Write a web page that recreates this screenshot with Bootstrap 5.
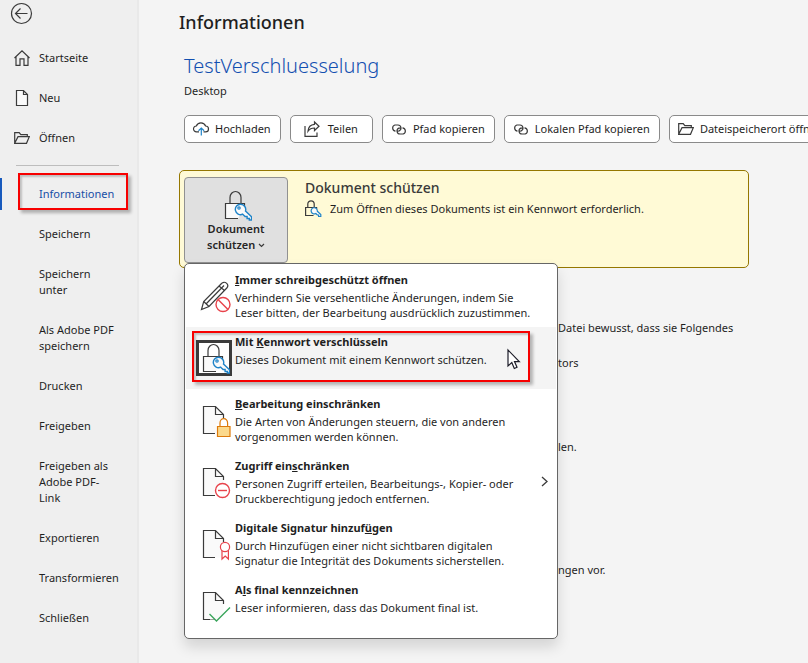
<!DOCTYPE html>
<html lang="de">
<head>
<meta charset="utf-8">
<meta name="viewport" content="width=device-width, initial-scale=1">
<title>Informationen</title>
<link href="https://cdn.jsdelivr.net/npm/bootstrap@5.3.0/dist/css/bootstrap.min.css" rel="stylesheet">
<style>
  body { font-family: "Noto Sans", "Open Sans", sans-serif; font-size: 11px; line-height: 16px; color: #1f1f1f; background: #f4f4f4; }
  svg { flex: none; fill: none; stroke: #3b3b3b; stroke-width: 1.2; overflow: visible; }
  .side { width: 139px; flex: none; background: #efefef; border-right: 2px solid #e9e9e9; }
  .back { margin: 2px 0 0 10px; width: 23px; height: 23px; }
  .side .nav { margin-top: 13px; }
  .side .nav-link { padding: 12px 8px 12px 39px; color: #1f1f1f; }
  .side .nav-link.with-icon { padding-left: 14px; gap: 9px; }
  .side hr { margin: 7px 18px 8px 16px; border-color: #bdbdbd; opacity: 1; }
  .side .nav-link.active { color: #174ea6; }
  .side .nav-link.active::before { content: ""; position: absolute; left: 0; top: 4px; bottom: 4px; width: 2px; background: #185abd; }
  .marker { position: absolute; border: 2px solid #f70000; box-shadow: 3px 3px 3px #0004, inset 2px 2px 2px #0003; pointer-events: none; }
  .marker-nav { inset: -1px 9px 4px 18px; }
  .marker-item { inset: 4px 26px 7px 6px; }
  main { padding: 8px 0 0 40px; min-width: 0; }
  h1 { font-size: 18px; line-height: 28px; font-weight: 500; margin: 0; }
  h2 { font-size: 20px; line-height: 28px; color: #124fb0; margin: 16px 0 0 5px; font-weight: 300; }
  .place { margin: 3px 0 16px 5px; }
  .tools { gap: 9px; margin-left: 5px; }
  .tools .btn { flex: none; gap: 6px; height: 28px; padding: 0 9px 0 8px; font-size: 11px; line-height: 16px; color: #1f1f1f; background: #fff; border-color: #8a8a8a; border-radius: 5px; }
  .tools .btn-share { padding: 0 14px 0 13px; gap: 8px; }
  .panel { margin-top: 27px; width: calc(100% - 59px); min-height: 98px; background: #fffad6; border: 1px solid #957700; border-radius: 5px; padding: 6px 4px 4px; gap: 17px; }
  .protect { width: 104px; height: 86px; padding: 12px 0 0; color: #262626; background: #e0e0e0; border: 1px solid #919191; border-radius: 4px; font-size: 11px; line-height: 16px; font-weight: 600; }
  .protect:hover { background: #e0e0e0; color: #262626; }
  .panel h3 { font-size: 14px; line-height: 20px; font-weight: 500; color: #3a3a3a; margin: 1px 0 2px; }
  .protect-menu { position: absolute; z-index: 5; top: 86px; left: 0; width: 374px; padding: 1px; background: #fff; border: 1px solid #666; border-radius: 5px; box-shadow: 0 8px 14px #0002; }
  .entry { height: 62px; padding: 7px 8px 0 49px; border: 0; background: transparent; color: #1f1f1f; line-height: 15px; }
  .entry strong { line-height: 16px; margin-bottom: 2px; }
  .entry.hot { background: #f4f4f4; }
  .entry-icon { position: absolute; left: 10px; top: 13px; width: 36px; height: 36px; }
  .hot .entry-icon { border: 3px solid #3b3b3b; background: #fff; }
  .chev { position: absolute; right: 8px; top: 25px; stroke-width: 1.3; }
  .pointer { position: absolute; right: 36px; top: 22px; }
  .behind { margin-left: 379px; }
  .behind p { margin: 0 0 19px; }
  .behind .after-list { margin-bottom: 68px; }
  .behind .after-section { margin-bottom: 107px; }
</style>
<script src="https://cdn.jsdelivr.net/npm/bootstrap@5.3.0/dist/js/bootstrap.bundle.min.js"></script>
</head>
<body>
<svg class="d-none">
  <symbol id="key-lock" viewBox="0 0 28 31">
    <path d="M6 13V7.500a5.500 6 0 0 1 11 0V13" fill="none"/>
    <path d="M14 28.500H1.500V13.500h19v3" fill="#fafafa"/>
    <path d="M18.700 24.200l2.400 2.300h2v2h2.200v1.500h2.200v-3.200l-6-5.800a5.200 5.200 0 1 0-2.800 3.200z" fill="#fafafa" stroke="#1e83c8" stroke-width="1.400"/>
    <circle cx="15" cy="18" r="1.200" fill="none" stroke="#1e83c8"/>
  </symbol>
  <symbol id="folder" viewBox="0 0 16 16">
    <path d="M.7 13V2.700h4.500l1.600 2h6.500v2M.7 13.300L4 6.700h11.300l-2.800 6.600z" fill="none"/>
  </symbol>
  <symbol id="chain" viewBox="0 0 16 11">
    <path d="M4.500 7.200A3.200 3.200 0 0 1 3.800 1H7a3.100 3.100 0 0 1 1.200 5.900L6.500 7.200M11.500 3.800A3.200 3.200 0 0 1 12.200 10H9a3.100 3.100 0 0 1-1.200-5.900L9.500 3.800" fill="none"/>
  </symbol>
  <symbol id="sheet" viewBox="0 0 36 36">
    <path d="M7.500 4.500h12l8 8v19h-20z" fill="#fafafa" stroke="none"/>
    <path d="M19 31.500H7.500v-27h12l8 8V16M19.500 4.500v8h8" fill="none"/>
  </symbol>
</svg>
<div class="d-flex min-vh-100 overflow-hidden">
  <aside class="side">
    <button type="button" class="back btn p-0 border-0 d-flex" aria-label="Zurück">
      <svg width="23" height="23" viewBox="0 0 23 23"><circle cx="11.500" cy="11.500" r="10"/><path d="M17.500 11.500h-12M10.500 6.500l-5 5 5 5"/></svg>
    </button>
    <nav class="nav flex-column flex-nowrap">
      <a class="nav-link with-icon d-flex" href="#"><svg width="16" height="16" viewBox="0 0 16 16"><path d="M.5 8L8 .8 15.500 8M2 6.800V15.300h4V8.800h4v6.500h4V6.800"/></svg>Startseite</a>
      <a class="nav-link with-icon d-flex" href="#"><svg width="16" height="16" viewBox="0 0 16 16"><path d="M2.500.5h7l4 4v11h-11zM9.500.5v4h4" fill="#fafafa"/></svg>Neu</a>
      <a class="nav-link with-icon d-flex" href="#"><svg width="16" height="16"><use href="#folder"/></svg>Öffnen</a>
      <hr>
      <a class="nav-link active position-relative" href="#">Informationen<span class="marker marker-nav"></span></a>
      <a class="nav-link" href="#">Speichern</a>
      <a class="nav-link" href="#">Speichern<br>unter</a>
      <a class="nav-link" href="#">Als Adobe PDF<br>speichern</a>
      <a class="nav-link" href="#">Drucken</a>
      <a class="nav-link" href="#">Freigeben</a>
      <a class="nav-link" href="#">Freigeben als<br>Adobe PDF-<br>Link</a>
      <a class="nav-link" href="#">Exportieren</a>
      <a class="nav-link" href="#">Transformieren</a>
      <a class="nav-link" href="#">Schließen</a>
    </nav>
  </aside>
  <main class="flex-grow-1">
    <h1>Informationen</h1>
    <h2>TestVerschluesselung</h2>
    <p class="place">Desktop</p>
    <div class="tools d-flex">
      <button type="button" class="btn d-flex align-items-center"><svg width="16" height="14" viewBox="0 0 16 14"><path d="M6 9.800H3.500a2.900 2.900 0 0 1-.2-5.800 5 5 0 0 1 9.300 0 2.900 2.900 0 0 1 0 5.800H10.500"/><path d="M8.300 13.500V6M5.500 8.700L8.300 6l2.800 2.700" stroke="#1e83c8"/></svg>Hochladen</button>
      <button type="button" class="btn btn-share d-flex align-items-center"><svg width="16" height="16" viewBox="0 0 16 16"><path d="M1 5v10.300h12V11.500M10.500 1L15 5.200 10.500 9.500V7C7 7 5.500 8 4 10.200 4.300 6 6.500 3.600 10.500 3.300z"/></svg>Teilen</button>
      <button type="button" class="btn d-flex align-items-center"><svg width="16" height="11"><use href="#chain"/></svg>Pfad kopieren</button>
      <button type="button" class="btn d-flex align-items-center"><svg width="16" height="11"><use href="#chain"/></svg>Lokalen Pfad kopieren</button>
      <button type="button" class="btn d-flex align-items-center"><svg width="16" height="16"><use href="#folder"/></svg>Dateispeicherort öffnen</button>
    </div>
    <section class="panel d-flex">
      <div class="position-relative">
        <button type="button" class="protect btn d-flex flex-column align-items-center" aria-expanded="true">
          <svg class="ms-1" width="28" height="31"><use href="#key-lock"/></svg>
          <span>Dokument<br>schützen <svg width="7" height="5" viewBox="0 0 7 5"><path d="M1 0l2.500 2.500L6 0"/></svg></span>
        </button>
        <div class="protect-menu">
          <button type="button" class="entry dropdown-item position-relative d-flex flex-column align-items-start">
            <svg class="entry-icon" viewBox="0 0 36 36"><path d="M5.500 31.500l2.200-8L25.500 5.500a3.300 3.300 0 0 1 5.300 4.500L13 28.500zM7.700 23.500l5.300 5M10 26L28 7.500M23 8l5.500 4.500"/><circle cx="27" cy="26.500" r="7" fill="#fff" stroke="#e8434b" stroke-width="1.400"/><path d="M22 21.500l10 10" stroke="#e8434b" stroke-width="1.400"/></svg>
            <strong><u>I</u>mmer schreibgeschützt öffnen</strong><span>Verhindern Sie versehentliche Änderungen, indem Sie<br>Leser bitten, der Bearbeitung ausdrücklich zuzustimmen.</span>
          </button>
          <button type="button" class="entry hot dropdown-item position-relative d-flex flex-column align-items-start">
            <svg class="entry-icon" viewBox="0 0 30 30"><use href="#key-lock" x="3" y="0" width="28" height="31"/></svg>
            <strong>Mit <u>K</u>ennwort verschlüsseln</strong><span>Dieses Dokument mit einem Kennwort schützen.</span>
            <span class="marker marker-item"></span>
            <svg class="pointer" width="13" height="21" viewBox="0 0 13 21"><path d="M1 1v16l3.800-3.500 2.500 6 2.700-1.200-2.500-5.700h4.800z" fill="#fff" stroke="#1c1c28"/></svg>
          </button>
          <button type="button" class="entry dropdown-item position-relative d-flex flex-column align-items-start">
            <svg class="entry-icon" viewBox="0 0 36 36"><use href="#sheet"/><path d="M20 22h15v14H20z" fill="#fff" stroke="none"/><path d="M24 24.500v-3.500a3.800 4.300 0 0 1 7.600 0v3.500" fill="#fff" stroke="#dd7a0b"/><path d="M21.500 24.500h12.500v10H21.500z" fill="#fbd98c" stroke="#dd7a0b"/></svg>
            <strong><u>B</u>earbeitung einschränken</strong><span>Die Arten von Änderungen steuern, die von anderen<br>vorgenommen werden können.</span>
          </button>
          <button type="button" class="entry dropdown-item position-relative d-flex flex-column align-items-start">
            <svg class="entry-icon" viewBox="0 0 36 36"><use href="#sheet"/><circle cx="26.500" cy="26.500" r="7" fill="#fff" stroke="#e8434b" stroke-width="1.400"/><path d="M22 26.500h9" stroke="#e8434b" stroke-width="1.400"/></svg>
            <strong>Zugriff ein<u>s</u>chränken</strong><span>Personen Zugriff erteilen, Bearbeitungs-, Kopier- oder<br>Druckberechtigung jedoch entfernen.</span>
            <svg class="chev" width="7" height="11" viewBox="0 0 7 11"><path d="M1 1l5 4.500L1 10"/></svg>
          </button>
          <button type="button" class="entry dropdown-item position-relative d-flex flex-column align-items-start">
            <svg class="entry-icon" viewBox="0 0 36 36"><use href="#sheet"/><g fill="#fff" stroke="#e8434b"><path d="M26 24v9l3.200-3 3.200 3v-9z"/><circle cx="29" cy="21" r="4.600"/></g></svg>
            <strong>Digitale Signatur hinzuf<u>ü</u>gen</strong><span>Durch Hinzufügen einer nicht sichtbaren digitalen<br>Signatur die Integrität des Dokuments sicherstellen.</span>
          </button>
          <button type="button" class="entry dropdown-item position-relative d-flex flex-column align-items-start">
            <svg class="entry-icon" viewBox="0 0 36 36"><use href="#sheet"/><path d="M14 26.500l6.500 6.500L34 19.500v12H14z" fill="#fff" stroke="none"/><path d="M13.500 26l7 7L34 19.500" stroke="#3ba55c" stroke-width="1.400"/></svg>
            <strong>A<u>l</u>s final kennzeichnen</strong><span>Leser informieren, dass das Dokument final ist.</span>
          </button>
        </div>
      </div>
      <div>
        <h3>Dokument schützen</h3>
        <div class="d-flex align-items-center gap-2"><svg width="17" height="18" viewBox="0 0 17 18"><path d="M8.500 15.500H.6V7.500h11v1.500M2.800 7.500V4a3.200 3.200 0 0 1 6.400 0v3.500"/><path d="M10.800 13.500l1.500 1.500h1.300v1.500h2.200v-2l-3.500-3.300a3.100 3.100 0 1 0-1.500 2.300z" fill="#fafafa" stroke="#1e83c8"/></svg>Zum Öffnen dieses Dokuments ist ein Kennwort erforderlich.</div>
      </div>
    </section>
    <section class="behind mt-5 pt-1 text-nowrap">
      <p>Datei bewusst, dass sie Folgendes</p>
      <p class="after-list">tors</p>
      <p class="after-section">len.</p>
      <p class="mb-0">ngen vor.</p>
    </section>
  </main>
</div>
</body>
</html>
